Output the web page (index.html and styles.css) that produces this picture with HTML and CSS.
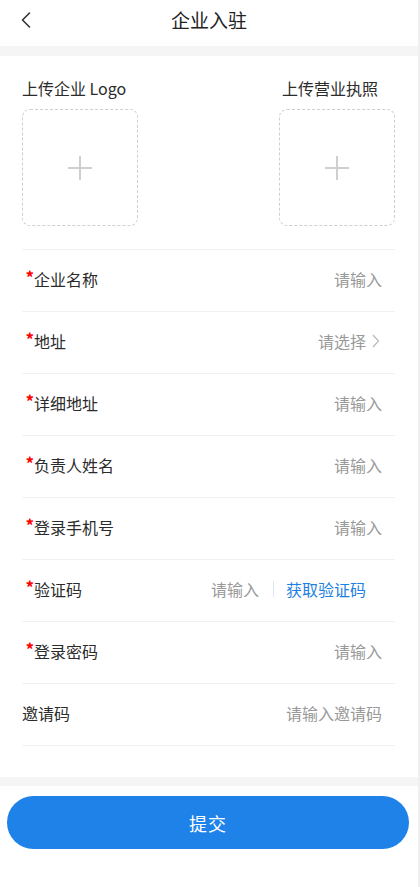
FILE: index.html
```html
<!DOCTYPE html>
<html lang="zh-CN">
<head>
  <meta charset="UTF-8" />
  <meta name="viewport" content="width=device-width, initial-scale=1" />
  <title>企业入驻</title>
  <link rel="stylesheet" href="styles.css">
</head>
<body>
  <div class="page">
    <header class="top-bar">
      <span class="back">
        <svg width="12" height="18" viewBox="0 0 12 18"><path d="M9.5 2 L2.5 9 L9.5 16" fill="none" stroke="#333" stroke-width="1.6" stroke-linecap="round" stroke-linejoin="round"/></svg>
      </span>
      <h1>企业入驻</h1>
    </header>

    <div class="gap"></div>

    <section class="form-box">
      <div class="uploads">
        <div class="upload">
          <p>上传企业 Logo</p>
          <div class="upload-box">
            <svg width="26" height="26" viewBox="0 0 26 26"><path d="M13 1 V25 M1 13 H25" stroke="#cfcfcf" stroke-width="2"/></svg>
          </div>
        </div>
        <div class="upload upload-right">
          <p>上传营业执照</p>
          <div class="upload-box">
            <svg width="26" height="26" viewBox="0 0 26 26"><path d="M13 1 V25 M1 13 H25" stroke="#cfcfcf" stroke-width="2"/></svg>
          </div>
        </div>
      </div>

      <div class="row">
        <span class="label"><i class="star">*</i>企业名称</span>
        <span class="hint">请输入</span>
      </div>
      <div class="row">
        <span class="label"><i class="star">*</i>地址</span>
        <span class="hint select">请选择
          <svg width="12" height="14" viewBox="0 0 12 14"><path d="M3 1 L8.5 7 L3 13" fill="none" stroke="#bbb" stroke-width="1.3"/></svg>
        </span>
      </div>
      <div class="row">
        <span class="label"><i class="star">*</i>详细地址</span>
        <span class="hint">请输入</span>
      </div>
      <div class="row">
        <span class="label"><i class="star">*</i>负责人姓名</span>
        <span class="hint">请输入</span>
      </div>
      <div class="row">
        <span class="label"><i class="star">*</i>登录手机号</span>
        <span class="hint">请输入</span>
      </div>
      <div class="row">
        <span class="label"><i class="star">*</i>验证码</span>
        <span class="code">
          <span class="hint">请输入</span>
          <span class="code-line"></span>
          <span class="code-btn">获取验证码</span>
        </span>
      </div>
      <div class="row">
        <span class="label"><i class="star">*</i>登录密码</span>
        <span class="hint">请输入</span>
      </div>
      <div class="row">
        <span class="label">邀请码</span>
        <span class="hint">请输入邀请码</span>
      </div>
    </section>

    <div class="gap small"></div>

    <div class="footer">
      <button class="submit">提交</button>
    </div>
  </div>
</body>
</html>
```

FILE: styles.css
```css
* {
  box-sizing: border-box;
}
body {
  margin: 0;
  background: #fff;
  font-family: "Noto Sans CJK SC", "Noto Sans", sans-serif;
  color: #333;
}
.page {
  width: 420px;
  min-height: 887px;
  border-right: 2px solid #f0f0f0;
}
.top-bar {
  height: 46px;
  padding-bottom: 8px;
  display: flex;
  align-items: center;
  justify-content: center;
  position: relative;
}
.top-bar h1 {
  margin: 0;
  font-size: 19px;
  font-weight: normal;
  color: #222;
}
.back {
  position: absolute;
  left: 20px;
  top: 11px;
  display: flex;
}
.gap {
  height: 10px;
  background: #f5f5f5;
}
.gap.small {
  height: 9px;
}
.form-box {
  padding: 0 23px 31px 22px;
}
.uploads {
  display: flex;
  justify-content: space-between;
  padding: 21px 0 23px;
  border-bottom: 1px solid #f1f1f1;
}
.upload p {
  margin: 0 0 10px;
  font-size: 16px;
  line-height: 22px;
  color: #2b2b2b;
}
.upload-right p {
  padding-left: 3px;
}
.upload-box {
  width: 116px;
  height: 117px;
  border: 1px dashed #cfcfcf;
  border-radius: 8px;
  display: flex;
  align-items: center;
  justify-content: center;
}
.row {
  height: 62px;
  display: flex;
  align-items: center;
  justify-content: space-between;
  padding: 0 13px 4px 0;
  border-bottom: 1px solid #f1f1f1;
  font-size: 16px;
}
.label {
  color: #2b2b2b;
}
.star {
  font-style: normal;
  font-weight: bold;
  font-size: 17px;
  color: #f00;
  display: inline-block;
  width: 12px;
  text-align: right;
  vertical-align: top;
  line-height: 20px;
}
.hint {
  color: #999;
}
.select {
  display: flex;
  align-items: center;
}
.select svg {
  margin-left: 4px;
}
.code {
  display: flex;
  align-items: center;
}
.code-line {
  width: 1px;
  height: 16px;
  background: #dbe7f4;
  margin: 0 12px 0 14px;
}
.code-btn {
  color: #1f7fe2;
  padding-right: 16px;
}
.footer {
  padding: 10px 9px 0 7px;
}
.submit {
  display: block;
  width: 100%;
  height: 53px;
  border: none;
  border-radius: 27px;
  background: #1e82e8;
  color: #fff;
  font-family: "Noto Sans CJK SC", sans-serif;
  font-size: 18px;
  letter-spacing: 1px;
}
```
